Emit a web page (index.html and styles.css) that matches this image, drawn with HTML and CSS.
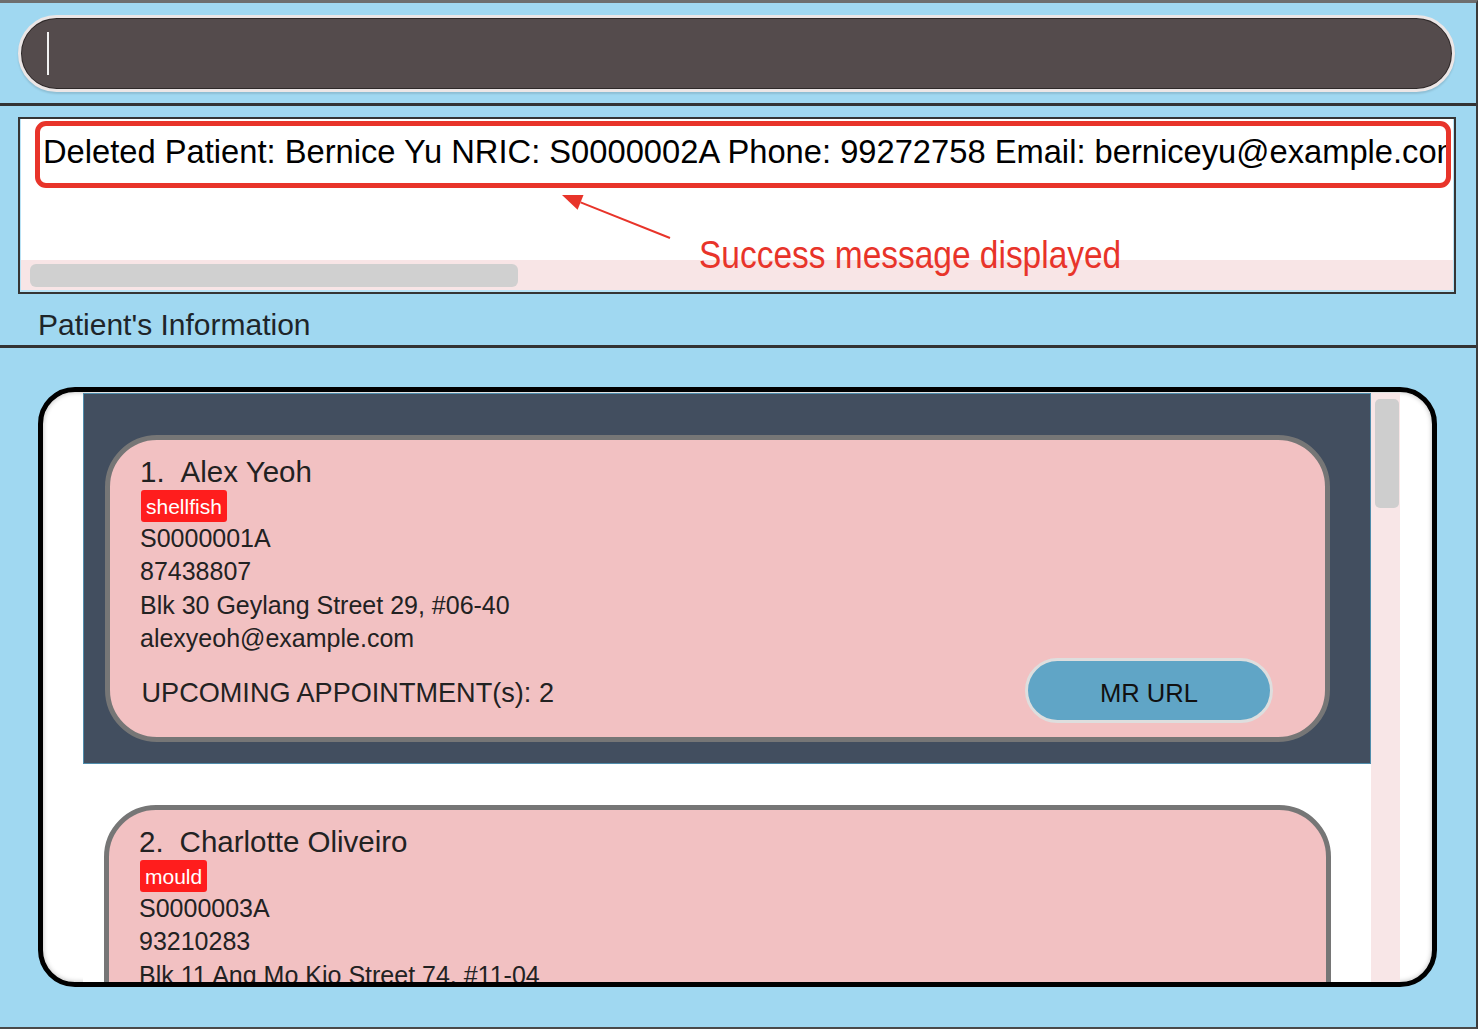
FILE: index.html
```html
<!DOCTYPE html>
<html lang="en">
<head>
<meta charset="utf-8">
<title>Patient list</title>
<link rel="stylesheet" href="styles.css">
</head>
<body>
<div class="app">
  <div class="command-area">
    <div class="command"><span class="caret"></span></div>
  </div>
  <div class="divider"></div>
  <div class="result-area">
    <div class="result">
      <div class="result-inner">
        <div class="result-text">Deleted Patient: Bernice Yu NRIC: S0000002A Phone: 99272758 Email: berniceyu@example.com</div>
        <div class="hscroll"><div class="hthumb"></div></div>
      </div>
      <div class="annot-box"></div>
      <svg class="annot-arrow" width="130" height="60" viewBox="0 0 130 60">
        <line x1="30.6" y1="17.4" x2="120" y2="53" stroke="#e8342a" stroke-width="2"/>
        <polygon points="12,10 33.5,10 27.6,24.8" fill="#e8342a"/>
      </svg>
      <div class="annot-text">Success message displayed</div>
    </div>
    <div class="section-label">Patient's Information</div>
  </div>
  <div class="divider"></div>
  <div class="list-area">
    <div class="list-panel">
      <div class="list-view">
        <div class="cells">
          <div class="cell selected">
            <div class="card">
              <div class="name"><span class="idx">1.</span>Alex Yeoh</div>
              <span class="tag">shellfish</span>
              <div class="line">S0000001A</div>
              <div class="line">87438807</div>
              <div class="line">Blk 30 Geylang Street 29, #06-40</div>
              <div class="line">alexyeoh@example.com</div>
              <div class="row">
                <span class="appt">UPCOMING APPOINTMENT(s): 2</span>
                <span class="mr-btn">MR URL</span>
              </div>
            </div>
          </div>
          <div class="cell">
            <div class="card card-cut">
              <div class="name"><span class="idx">2.</span>Charlotte Oliveiro</div>
              <span class="tag">mould</span>
              <div class="line">S0000003A</div>
              <div class="line">93210283</div>
              <div class="line">Blk 11 Ang Mo Kio Street 74, #11-04</div>
            </div>
          </div>
        </div>
        <div class="vscroll"><div class="vthumb"></div></div>
      </div>
    </div>
  </div>
</div>
</body>
</html>
```
FILE: styles.css
```css
* { box-sizing: border-box; }
html, body { margin: 0; padding: 0; background: #ffffff; }
body { font-family: "Liberation Sans", Arial, sans-serif; }

.app {
  width: 1478px;
  height: 1029px;
  background: #a0d8f1;
  border-top: 3px solid #6e6e6e;
  border-right: 2px solid #3a3a3a;
  border-bottom: 2px solid #4a4a4a;
  display: flex;
  flex-direction: column;
}

/* command box */
.command-area {
  height: 100px;
  padding: 12px 21px 0 18px;
}
.command {
  height: 77px;
  border: 3px solid #ebe6e6;
  border-radius: 39px;
  background: #544b4c;
  box-shadow: inset 0 0 0 1px #2e2929, 0 2px 2px rgba(0,0,0,0.12);
  padding-left: 26px;
  display: flex;
  align-items: center;
}
.caret {
  width: 2px;
  height: 43px;
  background: #f2f2f2;
}

.divider {
  height: 3px;
  background: #333333;
  flex: none;
}

/* result display */
.result-area {
  height: 239px;
  padding-top: 11px;
  flex: none;
}
.result {
  position: relative;
  margin-left: 18px;
  width: 1438px;
  height: 177px;
  border: 2px solid #353535;
  padding: 0 1px 2px 1px;
  background: #b9e3f6;
}
.result-inner {
  height: 100%;
  background: #ffffff;
  display: flex;
  flex-direction: column;
}
.result-text {
  flex: 1;
  width: 1425px;
  padding: 12.7px 0 0 22px;
  font-size: 32.7px;
  line-height: 40px;
  color: #000;
  white-space: nowrap;
  overflow: hidden;
}
.hscroll {
  height: 30px;
  background: #f8e5e6;
  padding: 4px 0 0 9px;
}
.hthumb {
  width: 488px;
  height: 23px;
  border-radius: 6px;
  background: #d0d0d0;
}

.annot-box {
  position: absolute;
  left: 15px;
  top: 2px;
  width: 1416px;
  height: 67px;
  border: 5px solid #e8342a;
  border-radius: 11px;
}
.annot-arrow {
  position: absolute;
  left: 530px;
  top: 66px;
}
.annot-text {
  position: absolute;
  left: 679px;
  top: 116px;
  font-family: "Liberation Sans", sans-serif;
  font-size: 39px;
  line-height: 40px;
  color: #e8342a;
  white-space: nowrap;
  transform: scaleX(0.858);
  transform-origin: 0 0;
}

.section-label {
  margin-top: 12.6px;
  padding-left: 38px;
  font-size: 30px;
  line-height: 36px;
  color: #1e2529;
}

/* list */
.list-area {
  flex: 1;
  padding: 39px 0 0 38px;
}
.list-panel {
  width: 1399px;
  height: 600px;
  border: 5px solid #000;
  border-radius: 37px;
  background: #ffffff;
  padding: 1px 32px 0 40px;
  overflow: hidden;
  box-shadow: inset 0 0 5px rgba(0,0,0,0.28);
}
.list-view {
  height: 589px;
  display: flex;
}
.cells {
  flex: 1;
  overflow: hidden;
}
.vscroll {
  width: 29px;
  background: #f8e6e7;
  padding: 6px 1px 0 4px;
}
.vthumb {
  height: 109px;
  border-radius: 5px;
  background: #cecece;
}

.cell {
  padding: 41px 40px 21px 21px;
  background: #ffffff;
}
.cell.selected {
  background: #424e5f;
  border: 1px solid #4f8cab;
}

.card {
  border: 5px solid #767676;
  border-radius: 52px;
  background: #f2c1c2;
  padding: 15px 52px 14px 30px;
  color: #222222;
}
.card-cut {
  padding-bottom: 120px;
}
.name {
  font-size: 29.5px;
  line-height: 34px;
  white-space: nowrap;
}
.idx { margin-right: 16px; }
.tag {
  display: inline-block;
  margin: 1px 0 0 1px;
  height: 32px;
  padding: 1px 5px 0 5px;
  font-size: 21px;
  line-height: 31px;
  background: #ff1d1d;
  color: #ffffff;
  border-radius: 3px;
  vertical-align: top;
}
.line {
  font-size: 25px;
  line-height: 33.3px;
  white-space: nowrap;
}
.row {
  margin-top: 2.8px;
  height: 65px;
  display: flex;
  align-items: flex-start;
}
.appt {
  margin: 17.8px 0 0 1.5px;
  font-size: 27.1px;
  line-height: 34px;
  white-space: nowrap;
}
.mr-btn {
  margin-left: auto;
  width: 248px;
  height: 65px;
  border: 3px solid #dedede;
  border-radius: 33px;
  background: #60a5c6;
  color: #111111;
  font-size: 25.6px;
  line-height: 53px;
  padding-top: 6px;
  text-align: center;
}
```
